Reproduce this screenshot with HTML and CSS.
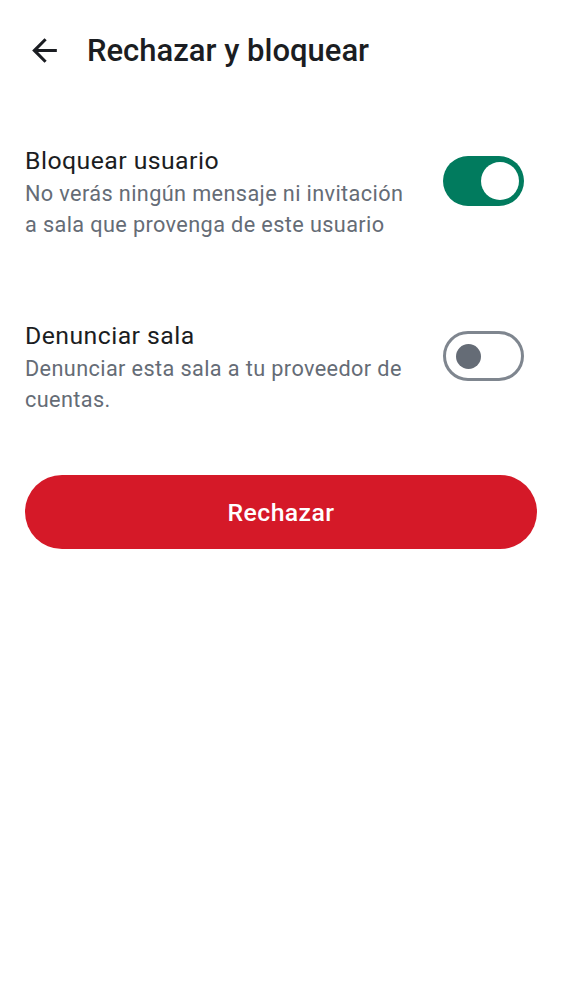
FILE: index.html
```html
<!DOCTYPE html>
<html lang="es">
<head>
<meta charset="utf-8">
<link rel="stylesheet" href="styles.css">
</head>
<body>
<div class="screen">
  <header class="topbar">
    <span class="back">
      <svg viewBox="0 0 24 24" width="37" height="37"><path d="M20 11H7.83l5.59-5.59L12 4l-8 8 8 8 1.41-1.41L7.83 13H20v-2z" fill="#1b1d22"/></svg>
    </span>
    <h1 class="title">Rechazar y bloquear</h1>
  </header>
  <main class="content">
    <div class="row row-first">
      <div class="text">
        <div class="label">Bloquear usuario</div>
        <div class="desc">No verás ningún mensaje ni invitación a sala que provenga de este usuario</div>
      </div>
      <span class="switch on"><span class="thumb"></span></span>
    </div>
    <div class="row row-second">
      <div class="text">
        <div class="label">Denunciar sala</div>
        <div class="desc">Denunciar esta sala a tu proveedor de cuentas.</div>
      </div>
      <span class="switch off"><span class="thumb"></span></span>
    </div>
    <button class="reject">Rechazar</button>
  </main>
</div>
</body>
</html>
```

FILE: styles.css
```css
html, body {
  margin: 0;
  padding: 0;
  background: #ffffff;
}
body {
  font-family: Roboto, "Noto Sans", sans-serif;
  color: #1b1d22;
}
.screen {
  width: 562px;
  height: 1000px;
  background: #fff;
}
.topbar {
  display: flex;
  align-items: center;
  height: 100px;
  padding-left: 26px;
  box-sizing: border-box;
}
.back {
  display: flex;
  width: 37px;
  height: 37px;
}
.title {
  margin: 0 0 0 24px;
  font-size: 31px;
  font-weight: 500;
  letter-spacing: 0;
  color: #1b1d22;
  line-height: 43px;
}
.content {
  padding: 0 25px;
  display: flex;
  flex-direction: column;
}
.row {
  display: flex;
  align-items: flex-start;
}
.row-first {
  margin-top: 43.5px;
}
.row-second {
  margin-top: 79px;
}
.text {
  width: 390px;
}
.label {
  font-size: 24.8px;
  line-height: 34px;
  letter-spacing: 0.45px;
  color: #1b1d22;
}
.desc {
  font-size: 21.7px;
  line-height: 31px;
  color: #656c76;
  letter-spacing: 0.38px;
}
.switch {
  margin-left: auto;
  margin-right: 13px;
  margin-top: 12.5px;
  width: 81px;
  height: 50px;
  border-radius: 25px;
  box-sizing: border-box;
  display: flex;
  align-items: center;
  flex-shrink: 0;
}
.switch.on {
  background: #017b5e;
  justify-content: flex-end;
  padding-right: 5px;
}
.switch.on .thumb {
  width: 38px;
  height: 38px;
  border-radius: 50%;
  background: #fff;
}
.switch.off {
  border: 3px solid #7f868f;
  background: #fff;
  padding-left: 10px;
}
.switch.off .thumb {
  width: 25px;
  height: 25px;
  border-radius: 50%;
  background: #656c76;
}
.reject {
  margin-top: 60.6px;
  height: 74px;
  border: none;
  border-radius: 37px;
  background: #d51928;
  color: #fff;
  font-family: Roboto, "Noto Sans", sans-serif;
  font-size: 24.8px;
  font-weight: 500;
  letter-spacing: 0.4px;
  padding: 0;
}
```
